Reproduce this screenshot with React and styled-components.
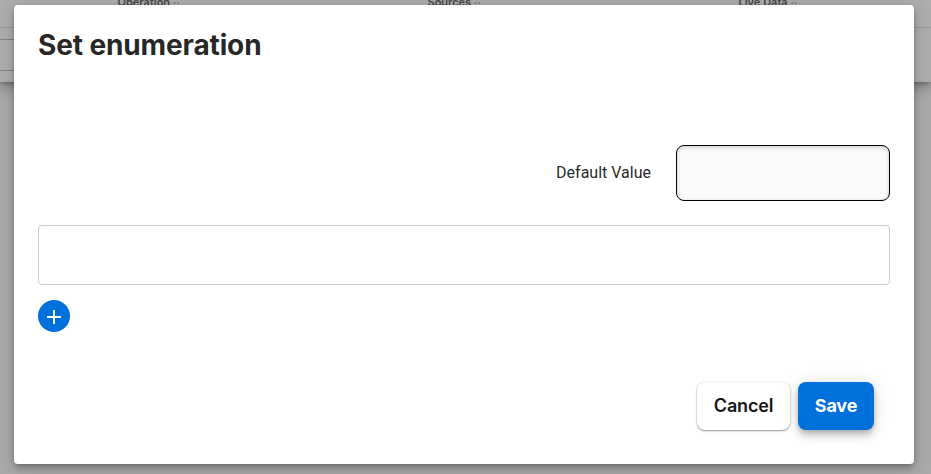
import React from "react";
import styled, { createGlobalStyle } from "styled-components";

const GlobalStyle = createGlobalStyle`
  *, *::before, *::after { box-sizing: border-box; }
  body { margin: 0; background: #fafafa; overflow: hidden; }
`;

const Page = styled.div`
  position: relative;
  height: 474px;
  overflow: hidden;
  font-family: Roboto, sans-serif;
  -webkit-font-smoothing: antialiased;
`;

const TablePanel = styled.section`
  height: 82px;
  background: #fff;
  box-shadow: 0 2px 4px -1px rgba(0, 0, 0, 0.25), 0 4px 14px rgba(0, 0, 0, 0.35);
`;

const HeaderRow = styled.div`
  display: grid;
  grid-template-columns: 310px 311px 1fr;
  height: 28px;
  padding-left: 117.5px;
  border-bottom: 1px solid #e0e0e0;
`;

const HeaderCell = styled.span`
  margin-top: -5px;
  font: 600 11px/14px Inter, sans-serif;
  color: #666;
  white-space: pre;
`;

const Dots = styled.span`
  position: relative;
  top: 2px;
  color: #aaa;
`;

const FilterField = styled.div`
  height: 32px;
  margin-top: 11px;
  border: solid #bbb;
  border-width: 1px 0;
  width: 400px;
`;

const Backdrop = styled.div`
  position: absolute;
  inset: 0;
  padding: 5px 17px 10px 14px;
  background: rgba(0, 0, 0, 0.32);
`;

const Dialog = styled.div`
  display: flex;
  flex-direction: column;
  height: 459px;
  padding: 24px;
  border-radius: 4px;
  background: #fff;
  color: rgba(0, 0, 0, 0.87);
  box-shadow: 0 3px 5px -1px rgba(0, 0, 0, 0.2),
    0 6px 10px rgba(0, 0, 0, 0.14), 0 1px 18px rgba(0, 0, 0, 0.12);
`;

const Title = styled.h1`
  margin: 0;
  font: 650 28px/32px Inter, sans-serif;
  letter-spacing: -0.13px;
`;

const DefaultRow = styled.div`
  display: flex;
  align-items: center;
  justify-content: flex-end;
  gap: 25px;
  margin-top: 84px;
`;

const FieldLabel = styled.label`
  padding-bottom: 2px;
  font-size: 16px;
`;

const ValueInput = styled.input`
  width: 214px;
  height: 56px;
  padding: 0 16px;
  border: 1px solid #000;
  border-radius: 8px;
  outline: none;
  background: #fafafa;
  box-shadow: inset 0 1px 4px rgba(0, 0, 0, 0.2);
`;

const ValueList = styled.div`
  height: 60px;
  margin-top: 24px;
  border: 1px solid #ccc;
  border-radius: 4px;
`;

const AddButton = styled.button`
  display: flex;
  align-items: center;
  justify-content: center;
  width: 32px;
  height: 32px;
  margin-top: 15px;
  padding: 2px 0 0;
  border: 0;
  border-radius: 50%;
  background: #0070dd;
`;

const Actions = styled.div`
  display: flex;
  justify-content: flex-end;
  gap: 8px;
  margin-top: 50px;
  padding-right: 16px;
`;

const ActionButton = styled.button`
  width: ${(p) => (p.$primary ? 76 : 93)}px;
  height: 48px;
  padding: 0;
  border: 0;
  border-radius: 8px;
  font: ${(p) => (p.$primary ? 650 : 600)} 18px/24px Inter, sans-serif;
  letter-spacing: -0.18px;
  color: ${(p) => (p.$primary ? "#fff" : "#151515")};
  background: ${(p) => (p.$primary ? "#0070dd" : "#fff")};
  box-shadow: ${(p) =>
    p.$primary
      ? "0 3px 5px -1px rgba(0,0,0,.2), 0 6px 10px rgba(0,0,0,.14), 0 1px 18px rgba(0,0,0,.12)"
      : "0 1px 2px rgba(0,0,0,.4), 0 0 2px rgba(0,0,0,.12)"};
`;

const columns = ["Operation", "Sources", "Live Data"];

export default function App() {
  return (
    <Page>
      <GlobalStyle />
      <TablePanel>
        <HeaderRow>
          {columns.map((name) => (
            <HeaderCell key={name}>
              {name} <Dots>::</Dots>
            </HeaderCell>
          ))}
        </HeaderRow>
        <FilterField />
      </TablePanel>
      <Backdrop>
        <Dialog role="dialog" aria-labelledby="dialog-title">
          <Title id="dialog-title">Set enumeration</Title>
          <DefaultRow>
            <FieldLabel htmlFor="default-value">Default Value</FieldLabel>
            <ValueInput id="default-value" />
          </DefaultRow>
          <ValueList />
          <AddButton aria-label="Add value">
            <svg width="14" height="14" viewBox="0 0 14 14">
              <path d="M7 0v14M0 7h14" stroke="#fff" strokeWidth="2" />
            </svg>
          </AddButton>
          <Actions>
            <ActionButton>Cancel</ActionButton>
            <ActionButton $primary>Save</ActionButton>
          </Actions>
        </Dialog>
      </Backdrop>
    </Page>
  );
}
